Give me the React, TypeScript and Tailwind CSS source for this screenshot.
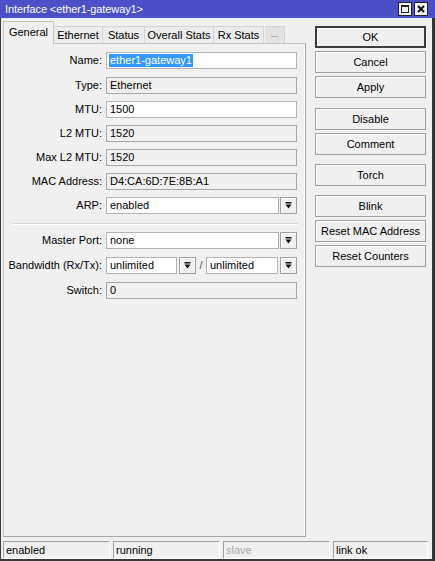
import React from "react";

const DropIcon = () => (
  <svg width="9" height="9" viewBox="0 0 9 9">
    <rect x="1.5" y="1" width="6" height="1.5" fill="#111" />
    <path d="M1.5 3.5h6L4.5 7.5z" fill="#111" />
  </svg>
);

const DropBtn = () => (
  <div className="w-[17px] h-[17px] border border-[#a0a0a0] bg-[#f0f0f0] shadow-[inset_1px_1px_0_#fff] flex items-center justify-center">
    <DropIcon />
  </div>
);

type FieldProps = { value: string; ro?: boolean; w: string; selected?: boolean };

const Field = ({ value, ro, w, selected }: FieldProps) => (
  <div
    className={`${w} h-[17px] border flex items-center pl-[2px] text-[11px] leading-none ${
      ro ? "bg-[#f0f0f0] border-[#a6a6a6]" : "bg-white border-[#b4b4b4]"
    }`}
  >
    {selected ? (
      <span className="bg-[#3399ff] text-white px-[1px] py-[1px]">{value}</span>
    ) : (
      <span className="pl-[1px]">{value}</span>
    )}
  </div>
);

const Row = ({ label, children, className = "" }: { label: string; children: React.ReactNode; className?: string }) => (
  <div className={`flex items-center h-[17px] ${className}`}>
    <div className="w-[98px] text-right text-[11px] leading-none">{label}</div>
    <div className="ml-[4px] flex items-center">{children}</div>
  </div>
);

const Btn = ({ label, def, className = "" }: { label: string; def?: boolean; className?: string }) => (
  <div
    className={`h-[22px] w-[111px] flex items-center justify-center text-[11px] bg-[#f0f0f0] shadow-[inset_1px_1px_0_#fff] ${
      def ? "border-2 border-[#3c3c3c]" : "border border-[#a0a0a0]"
    } ${className}`}
  >
    {label}
  </div>
);

const tabs = [
  { label: "Ethernet", w: "w-[49px]" },
  { label: "Status", w: "w-[42px]" },
  { label: "Overall Stats", w: "w-[69px]" },
  { label: "Rx Stats", w: "w-[50px]" },
];

const StatusCell = ({ text, w, dim }: { text: string; w: string; dim?: boolean }) => (
  <div
    className={`${w} h-[18px] border-t border-l border-[#a0a0a0] border-b border-r border-b-white border-r-white flex items-center pl-[2px] text-[11px] ${
      dim ? "text-[#a8a8a8]" : "text-black"
    }`}
  >
    {text}
  </div>
);

export default function App() {
  return (
    <div className="w-[435px] h-[561px] overflow-hidden flex flex-col bg-[#2f2f2f] text-black font-['Liberation_Sans',Arial,sans-serif]">
      {/* title bar */}
      <div className="h-[18px] bg-[#4b4fc8] flex items-center justify-between pl-[5px] pr-[7px]">
        <span className="text-white text-[11px] leading-none tracking-[-0.1px]">Interface &lt;ether1-gateway1&gt;</span>
        <div className="flex gap-[2px]">
          <div className="w-[14px] h-[14px] bg-[#f0f0f0] border border-[#222] flex items-center justify-center">
            <div className="w-[8px] h-[8px] border border-[#222] border-t-2" />
          </div>
          <div className="w-[14px] h-[14px] bg-[#f0f0f0] border border-[#222] flex items-center justify-center">
            <svg width="8" height="8" viewBox="0 0 8 8">
              <path d="M1 1L7 7M7 1L1 7" stroke="#111" strokeWidth="2" />
            </svg>
          </div>
        </div>
      </div>

      {/* window body */}
      <div className="flex-1 w-[433px] bg-[#f0f0f0] border-l border-r border-b-2 border-[#3a3a3a] flex flex-col">
        <div className="flex">
          {/* tabs + panel */}
          <div className="ml-[2px] w-[303px] flex flex-col">
            <div className="h-[25px] flex items-end">
              <div className="relative z-10 w-[51px] h-[23px] -mb-[1px] bg-[#f0f0f0] border-l border-t border-r border-[#c4c4c4] flex items-center justify-center text-[11px] pb-[2px]">
                General
              </div>
              {tabs.map((t) => (
                <div
                  key={t.label}
                  className={`${t.w} h-[17px] bg-[#ececec] border-t border-r border-[#d2d2d2] flex items-center justify-center text-[11px]`}
                >
                  {t.label}
                </div>
              ))}
              <div className="ml-[1px] w-[20px] h-[17px] bg-[#e3e3e3] border-t border-r border-[#d2d2d2] flex items-center justify-center text-[9px] text-[#666]">
                ...
              </div>
            </div>
            <div className="h-[494px] border border-[#c4c4c4] border-r-[#a8a8a8] border-b-[#a8a8a8] shadow-[inset_-1px_0_0_#fff] pt-[8px] flex flex-col">
              <Row label="Name:">
                <Field value="ether1-gateway1" w="w-[191px]" selected />
              </Row>
              <Row label="Type:" className="mt-[8px]">
                <Field value="Ethernet" w="w-[191px]" ro />
              </Row>
              <Row label="MTU:" className="mt-[7px]">
                <Field value="1500" w="w-[191px]" />
              </Row>
              <Row label="L2 MTU:" className="mt-[7px]">
                <Field value="1520" w="w-[191px]" ro />
              </Row>
              <Row label="Max L2 MTU:" className="mt-[7px]">
                <Field value="1520" w="w-[191px]" ro />
              </Row>
              <Row label="MAC Address:" className="mt-[7px]">
                <Field value="D4:CA:6D:7E:8B:A1" w="w-[191px]" ro />
              </Row>
              <Row label="ARP:" className="mt-[7px]">
                <Field value="enabled" w="w-[173px]" />
                <div className="ml-[1px]">
                  <DropBtn />
                </div>
              </Row>
              <div className="mt-[9px] ml-[8px] w-[286px] h-[2px] border-t border-[#d8d8d8] border-b border-b-white" />
              <Row label="Master Port:" className="mt-[7px]">
                <Field value="none" w="w-[173px]" />
                <div className="ml-[1px]">
                  <DropBtn />
                </div>
              </Row>
              <Row label="Bandwidth (Rx/Tx):" className="mt-[8px]">
                <Field value="unlimited" w="w-[71px]" />
                <div className="ml-[2px]">
                  <DropBtn />
                </div>
                <span className="w-[10px] text-center text-[11px] text-[#555]">/</span>
                <Field value="unlimited" w="w-[72px]" />
                <div className="ml-[2px]">
                  <DropBtn />
                </div>
              </Row>
              <Row label="Switch:" className="mt-[8px]">
                <Field value="0" w="w-[191px]" ro />
              </Row>
            </div>
          </div>

          {/* buttons */}
          <div className="ml-[9px] pt-[8px] flex flex-col">
            <Btn label="OK" def />
            <Btn label="Cancel" className="mt-[3px]" />
            <Btn label="Apply" className="mt-[3px]" />
            <Btn label="Disable" className="mt-[10px]" />
            <Btn label="Comment" className="mt-[3px]" />
            <Btn label="Torch" className="mt-[9px]" />
            <Btn label="Blink" className="mt-[9px]" />
            <Btn label="Reset MAC Address" className="mt-[3px]" />
            <Btn label="Reset Counters" className="mt-[3px]" />
          </div>
        </div>

        {/* status bar */}
        <div className="mt-[4px] ml-[2px] flex gap-[3px]">
          <StatusCell text="enabled" w="w-[107px]" />
          <StatusCell text="running" w="w-[107px]" />
          <StatusCell text="slave" w="w-[107px]" dim />
          <StatusCell text="link ok" w="w-[95px]" />
        </div>
      </div>
    </div>
  );
}
